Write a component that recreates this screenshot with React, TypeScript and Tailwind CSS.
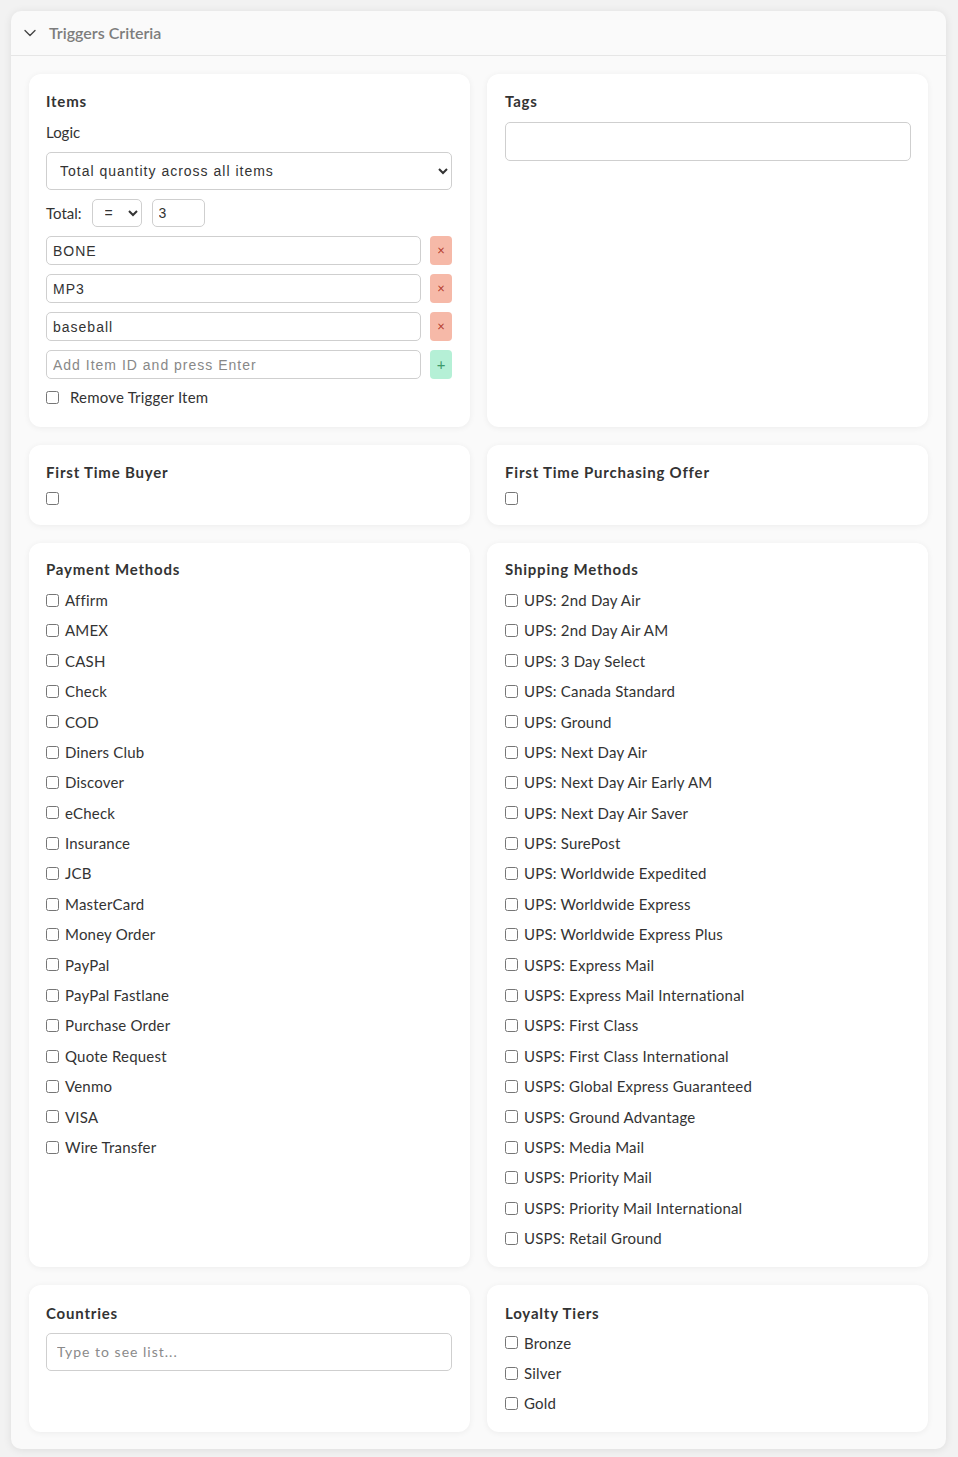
import { ChevronDown } from 'lucide-react'

const payments = [
  'Affirm',
  'AMEX',
  'CASH',
  'Check',
  'COD',
  'Diners Club',
  'Discover',
  'eCheck',
  'Insurance',
  'JCB',
  'MasterCard',
  'Money Order',
  'PayPal',
  'PayPal Fastlane',
  'Purchase Order',
  'Quote Request',
  'Venmo',
  'VISA',
  'Wire Transfer',
]

const shipping = [
  'UPS: 2nd Day Air',
  'UPS: 2nd Day Air AM',
  'UPS: 3 Day Select',
  'UPS: Canada Standard',
  'UPS: Ground',
  'UPS: Next Day Air',
  'UPS: Next Day Air Early AM',
  'UPS: Next Day Air Saver',
  'UPS: SurePost',
  'UPS: Worldwide Expedited',
  'UPS: Worldwide Express',
  'UPS: Worldwide Express Plus',
  'USPS: Express Mail',
  'USPS: Express Mail International',
  'USPS: First Class',
  'USPS: First Class International',
  'USPS: Global Express Guaranteed',
  'USPS: Ground Advantage',
  'USPS: Media Mail',
  'USPS: Priority Mail',
  'USPS: Priority Mail International',
  'USPS: Retail Ground',
]

const tiers = ['Bronze', 'Silver', 'Gold']

const items = ['BONE', 'MP3', 'baseball']

const cardBase = 'rounded-[12px] bg-white shadow-[0_1px_6px_rgba(0,0,0,0.06)]'
const left = `${cardBase} pl-[17px] pr-[18px]`
const right = `${cardBase} pl-[18px] pr-[17px]`
const heading = 'text-[15px] font-bold leading-[20px] tracking-[0.8px] text-[#333]'
const box = 'm-0 h-[13px] w-[13px] shrink-0'
const field =
  'rounded-[5px] border border-[#cfcfcf] bg-white font-["Liberation_Sans",Arial,sans-serif] text-[14px] tracking-[1px] text-[#333] outline-none'

function CheckRow({ label }: { label: string }) {
  return (
    <label className="flex h-[30.4px] items-center gap-[6px] text-[15px] tracking-[0.2px] text-[#333]">
      <input type="checkbox" className={box} />
      <span>{label}</span>
    </label>
  )
}

export default function App() {
  return (
    <div className="min-h-[1457px] bg-[#f2f2f2] pt-[11px] pr-[12px] pb-[8px] pl-[11px] font-['Lato','Open_Sans',sans-serif]">
      <div className="rounded-[10px] bg-[#fafafa] shadow-[0_1px_8px_rgba(0,0,0,0.09)]">
        <div className="flex h-[45px] items-center gap-[9px] border-b border-[#e6e6e6] pl-[9px]">
          <ChevronDown size={20} strokeWidth={1.6} className="text-[#444]" />
          <span className="text-[16px] font-semibold text-[#7d7d7d]">Triggers Criteria</span>
        </div>

        <div className="grid grid-cols-2 gap-x-[17px] gap-y-[18px] px-[18px] pt-[18px] pb-[17px]">
          {/* Items */}
          <div className={`${left} pt-[17px] pb-[20px]`}>
            <div className={heading}>Items</div>
            <div className="mt-[11px] text-[15px] leading-[20px] text-[#333]">Logic</div>
            <select
              className={`${field} mt-[10px] h-[38px] w-full pl-[9px] pr-[8px]`}
              defaultValue="total"
            >
              <option value="total">Total quantity across all items</option>
              <option value="each">Each item quantity</option>
            </select>
            <div className="mt-[9px] flex items-center gap-[10px]">
              <span className="text-[15px] text-[#333]">Total:</span>
              <div className="flex gap-[10px]">
                <select
                  className={`${field} h-[28px] w-[50px] rounded-[4px] pl-[8px] pr-[4px]`}
                  defaultValue="="
                >
                  <option value="=">=</option>
                  <option value=">">&gt;</option>
                  <option value="<">&lt;</option>
                </select>
                <input
                  className={`${field} h-[28px] w-[53px] rounded-[4px] px-[6px]`}
                  defaultValue="3"
                />
              </div>
            </div>
            {items.map((item) => (
              <div key={item} className="mt-[9px] flex items-center gap-[9px]">
                <input
                  className={`${field} h-[29px] min-w-0 flex-1 px-[6px]`}
                  defaultValue={item}
                />
                <button
                  type="button"
                  className="flex h-[29px] w-[22px] items-center justify-center rounded-[4px] bg-[#f6b9a8] text-[13px] leading-none text-[#b23a2a]"
                >
                  ×
                </button>
              </div>
            ))}
            <div className="mt-[9px] flex items-center gap-[9px]">
              <input
                className={`${field} h-[29px] min-w-0 flex-1 px-[6px] placeholder:text-[#888]`}
                placeholder="Add Item ID and press Enter"
              />
              <button
                type="button"
                className="flex h-[29px] w-[22px] items-center justify-center rounded-[4px] bg-[#b5f0d6] text-[15px] leading-none text-[#3d9a6b]"
              >
                +
              </button>
            </div>
            <label className="mt-[8px] flex h-[20px] items-center gap-[11px] text-[15px] tracking-[0.2px] text-[#333]">
              <input type="checkbox" className={box} />
              <span>Remove Trigger Item</span>
            </label>
          </div>

          {/* Tags */}
          <div className={`${right} pt-[17px] pb-[20px]`}>
            <div className={heading}>Tags</div>
            <input className={`${field} mt-[11px] h-[39px] w-full px-[10px]`} />
          </div>

          <div className={`${left} pt-[17px] pb-[17px]`}>
            <div className={heading}>First Time Buyer</div>
            <div className="mt-[6px] flex h-[20px] items-center">
              <input type="checkbox" className={box} />
            </div>
          </div>

          <div className={`${right} pt-[17px] pb-[17px]`}>
            <div className={heading}>First Time Purchasing Offer</div>
            <div className="mt-[6px] flex h-[20px] items-center">
              <input type="checkbox" className={box} />
            </div>
          </div>

          <div className={`${left} pt-[16px] pb-[13px]`}>
            <div className={heading}>Payment Methods</div>
            <div className="mt-[6px]">
              {payments.map((p) => (
                <CheckRow key={p} label={p} />
              ))}
            </div>
          </div>

          <div className={`${right} pt-[16px] pb-[13px]`}>
            <div className={heading}>Shipping Methods</div>
            <div className="mt-[6px]">
              {shipping.map((s) => (
                <CheckRow key={s} label={s} />
              ))}
            </div>
          </div>

          <div className={`${left} pt-[18px] pb-[13px]`}>
            <div className={heading}>Countries</div>
            <input
              className="mt-[10px] h-[38px] w-full rounded-[5px] border border-[#cfcfcf] bg-white px-[10px] text-[14px] tracking-[1px] text-[#333] outline-none placeholder:text-[#8a8a8a]"
              placeholder="Type to see list..."
            />
          </div>

          <div className={`${right} pt-[18px] pb-[13px]`}>
            <div className={heading}>Loyalty Tiers</div>
            <div className="mt-[5px]">
              {tiers.map((t) => (
                <CheckRow key={t} label={t} />
              ))}
            </div>
          </div>
        </div>
      </div>
    </div>
  )
}
